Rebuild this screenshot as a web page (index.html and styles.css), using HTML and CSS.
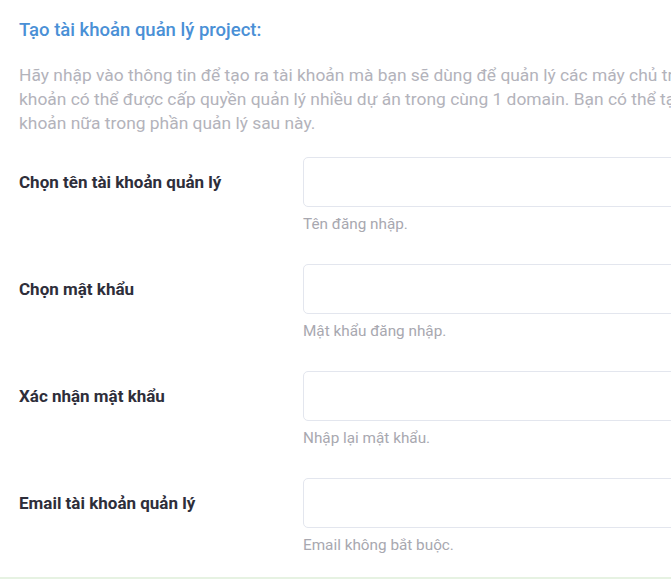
FILE: index.html
```html
<!DOCTYPE html>
<html lang="vi">
<head>
<meta charset="utf-8">
<title>Tạo tài khoản quản lý project</title>
<link rel="stylesheet" href="styles.css">
</head>
<body>
<div class="page">
  <h2 class="title">Tạo tài khoản quản lý project:</h2>
  <p class="intro">Hãy nhập vào thông tin để tạo ra tài khoản mà bạn sẽ dùng để quản lý các máy chủ trong project. Tài khoản có thể được cấp quyền quản lý nhiều dự án trong cùng 1 domain. Bạn có thể tạo thêm nhiều tài khoản nữa trong phần quản lý sau này.</p>
  <form class="form">
    <div class="row">
      <label class="label" for="u">Chọn tên tài khoản quản lý</label>
      <div class="field">
        <input class="input" id="u" type="text">
        <div class="help">Tên đăng nhập.</div>
      </div>
    </div>
    <div class="row">
      <label class="label" for="p">Chọn mật khẩu</label>
      <div class="field">
        <input class="input" id="p" type="password">
        <div class="help">Mật khẩu đăng nhập.</div>
      </div>
    </div>
    <div class="row">
      <label class="label" for="c">Xác nhận mật khẩu</label>
      <div class="field">
        <input class="input" id="c" type="password">
        <div class="help">Nhập lại mật khẩu.</div>
      </div>
    </div>
    <div class="row">
      <label class="label" for="e">Email tài khoản quản lý</label>
      <div class="field">
        <input class="input" id="e" type="email">
        <div class="help">Email không bắt buộc.</div>
      </div>
    </div>
  </form>
  <div class="footer-line"></div>
</div>
</body>
</html>
```

FILE: styles.css
```css
html, body {
  margin: 0;
  padding: 0;
  background: #ffffff;
  overflow: hidden;
}
body {
  font-family: Roboto, "Noto Sans", sans-serif;
  width: 671px;
  height: 580px;
}
.page {
  width: 900px;
  padding: 0 0 0 19px;
  box-sizing: border-box;
}
.title {
  margin: 0;
  padding-top: 20px;
  font-size: 18.5px;
  font-weight: 500;
  line-height: 20px;
  color: #4a90d6;
}
.intro {
  margin: 23px 0 0 0;
  width: 800px;
  font-size: 17.4px;
  line-height: 24px;
  color: #b3b3bb;
}
.form {
  margin-top: 22px;
  display: flex;
  flex-direction: column;
  gap: 31px;
}
.row {
  display: grid;
  grid-template-columns: 284px 1fr;
}
.label {
  height: 50px;
  display: flex;
  align-items: center;
  font-size: 17px;
  font-weight: 700;
  color: #2e2e3a;
}
.field {
  display: flex;
  flex-direction: column;
}
.input {
  height: 50px;
  box-sizing: border-box;
  border: 1px solid #e3e6ee;
  border-radius: 5px;
  background: #fff;
  margin: 0;
  width: 100%;
}
.help {
  margin-top: 8px;
  font-size: 15.3px;
  line-height: 18px;
  color: #a8a8b0;
}
.footer-line {
  position: absolute;
  left: 0;
  top: 577px;
  width: 671px;
  height: 2px;
  background: #e6f2e2;
}
```
